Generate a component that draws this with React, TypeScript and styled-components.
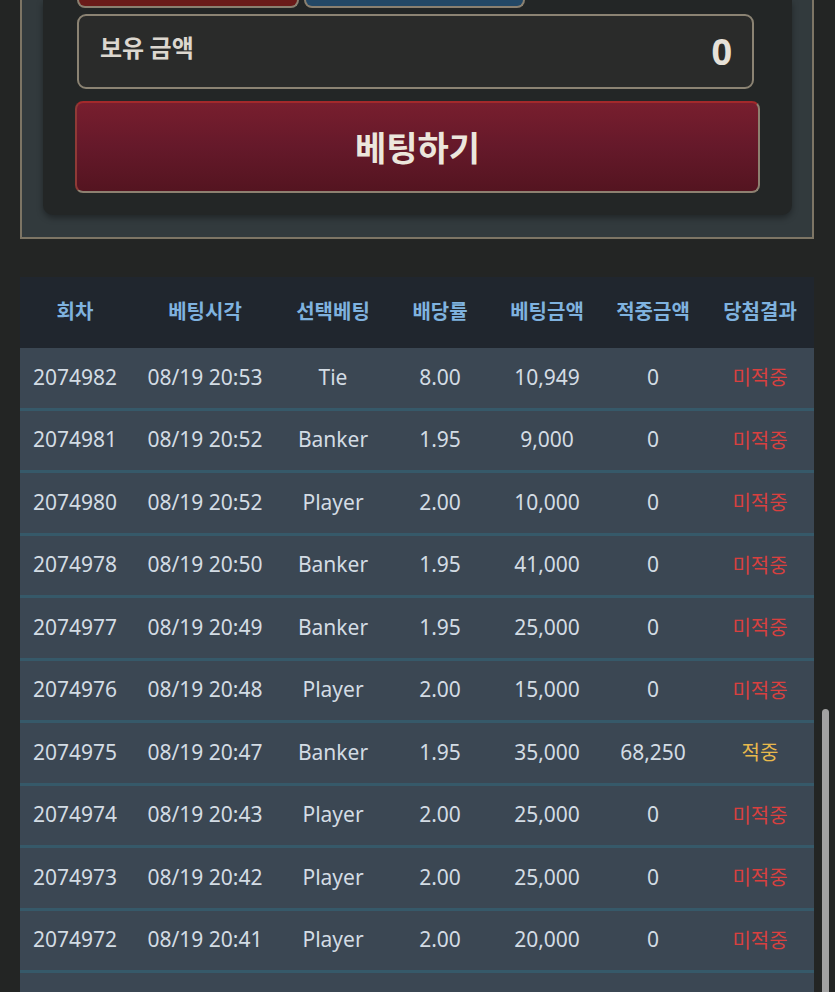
import React from "react";
import styled, { createGlobalStyle } from "styled-components";

const GlobalStyle = createGlobalStyle`
  html, body {
    margin: 0;
    padding: 0;
    overflow: hidden;
    background: #232524;
  }
  body {
    font-family: "Noto Sans", "Noto Sans CJK KR", sans-serif;
  }
  * { box-sizing: border-box; }
`;

const Page = styled.div`
  width: 835px;
  padding: 0 21px 0 20px;
  display: flex;
  flex-direction: column;
  gap: 38px;
`;

const Panel = styled.div`
  background: #323a3d;
  border: 2px solid #7d7565;
  border-top: none;
  padding: 0 20px 22px 21px;
`;

const Card = styled.div`
  background: #232626;
  border-radius: 0 0 10px 10px;
  box-shadow: 0 3px 6px rgba(0, 0, 0, 0.35);
  padding: 0 32px 22px 32px;
  display: flex;
  flex-direction: column;
`;

const ChoiceRow = styled.div`
  display: flex;
  gap: 5px;
  margin-left: 2px;
`;

const Choice = styled.div<{ $tone: "red" | "blue" }>`
  width: ${(p) => (p.$tone === "red" ? 222 : 221)}px;
  height: 8px;
  background: ${(p) => (p.$tone === "red" ? "#6a1b19" : "#234866")};
  border: 2px solid #8a8070;
  border-top: none;
  border-radius: 0 0 8px 8px;
`;

const BalanceBox = styled.div`
  margin: 6px 6px 0 2px;
  height: 75px;
  border: 2px solid #8b8373;
  border-radius: 9px;
  background: #2a2b2a;
  padding: 0 20px 0 21px;
  display: flex;
  align-items: center;
  justify-content: space-between;
`;

const BalanceLabel = styled.span`
  font-family: "Noto Sans CJK KR", sans-serif;
  font-size: 24px;
  font-weight: 700;
  color: #dcd7cf;
  margin-bottom: 10px;
`;

const BalanceValue = styled.span`
  font-size: 36px;
  font-weight: 700;
  color: #e6e1d8;
  line-height: 1;
`;

const BetButton = styled.button`
  margin-top: 12px;
  height: 92px;
  width: 100%;
  border-radius: 8px;
  border: 2px solid #8d8070;
  border-top-color: #a3292b;
  border-left-color: #8f3a36;
  background: linear-gradient(180deg, #781e2e 0%, #65192a 50%, #541420 100%);
  color: #ece6dc;
  font-family: "Noto Sans CJK KR", sans-serif;
  font-size: 34px;
  font-weight: 700;
  display: flex;
  align-items: center;
  justify-content: center;
  padding: 0 0 2px 0;
`;

const Table = styled.div`
  display: flex;
  flex-direction: column;
`;

const cols = "110px 150px 106px 108px 106px 106px 108px";

const HeadRow = styled.div`
  display: grid;
  grid-template-columns: ${cols};
  height: 71px;
  background: #20262e;
  align-items: center;
`;

const HeadCell = styled.div`
  text-align: center;
  font-family: "Noto Sans CJK KR", sans-serif;
  font-size: 20px;
  font-weight: 700;
  color: #7fb2df;
  white-space: nowrap;
  padding-bottom: 4px;
`;

const Row = styled.div`
  display: grid;
  grid-template-columns: ${cols};
  height: 62.5px;
  background: #3b4753;
  border-bottom: 3px solid #365969;
  align-items: center;
`;

const Cell = styled.div`
  text-align: center;
  font-size: 21px;
  color: #d3dce4;
  white-space: nowrap;
  padding-bottom: 2px;
`;

const Result = styled.div<{ $win: boolean }>`
  text-align: center;
  font-family: "Noto Sans CJK KR", sans-serif;
  font-size: 20px;
  color: ${(p) => (p.$win ? "#e8b94c" : "#d8403f")};
  white-space: nowrap;
  padding-bottom: 2px;
`;

const ScrollThumb = styled.div`
  position: fixed;
  right: 6px;
  top: 709px;
  width: 7px;
  height: 320px;
  border-radius: 4px;
  background: #a2a2a2;
`;

type Bet = {
  round: string;
  time: string;
  pick: string;
  odds: string;
  amount: string;
  hit: string;
  win: boolean;
};

const bets: Bet[] = [
  { round: "2074982", time: "08/19 20:53", pick: "Tie", odds: "8.00", amount: "10,949", hit: "0", win: false },
  { round: "2074981", time: "08/19 20:52", pick: "Banker", odds: "1.95", amount: "9,000", hit: "0", win: false },
  { round: "2074980", time: "08/19 20:52", pick: "Player", odds: "2.00", amount: "10,000", hit: "0", win: false },
  { round: "2074978", time: "08/19 20:50", pick: "Banker", odds: "1.95", amount: "41,000", hit: "0", win: false },
  { round: "2074977", time: "08/19 20:49", pick: "Banker", odds: "1.95", amount: "25,000", hit: "0", win: false },
  { round: "2074976", time: "08/19 20:48", pick: "Player", odds: "2.00", amount: "15,000", hit: "0", win: false },
  { round: "2074975", time: "08/19 20:47", pick: "Banker", odds: "1.95", amount: "35,000", hit: "68,250", win: true },
  { round: "2074974", time: "08/19 20:43", pick: "Player", odds: "2.00", amount: "25,000", hit: "0", win: false },
  { round: "2074973", time: "08/19 20:42", pick: "Player", odds: "2.00", amount: "25,000", hit: "0", win: false },
  { round: "2074972", time: "08/19 20:41", pick: "Player", odds: "2.00", amount: "20,000", hit: "0", win: false },
  { round: "2074971", time: "08/19 20:40", pick: "Banker", odds: "1.95", amount: "20,000", hit: "39,000", win: true },
];

const headers = ["회차", "베팅시각", "선택베팅", "배당률", "베팅금액", "적중금액", "당첨결과"];

export default function App() {
  return (
    <>
      <GlobalStyle />
      <Page>
        <Panel>
          <Card>
            <ChoiceRow>
              <Choice $tone="red" />
              <Choice $tone="blue" />
            </ChoiceRow>
            <BalanceBox>
              <BalanceLabel>보유 금액</BalanceLabel>
              <BalanceValue>0</BalanceValue>
            </BalanceBox>
            <BetButton type="button">베팅하기</BetButton>
          </Card>
        </Panel>
        <Table>
          <HeadRow>
            {headers.map((h) => (
              <HeadCell key={h}>{h}</HeadCell>
            ))}
          </HeadRow>
          {bets.map((b) => (
            <Row key={b.round}>
              <Cell>{b.round}</Cell>
              <Cell>{b.time}</Cell>
              <Cell>{b.pick}</Cell>
              <Cell>{b.odds}</Cell>
              <Cell>{b.amount}</Cell>
              <Cell>{b.hit}</Cell>
              <Result $win={b.win}>{b.win ? "적중" : "미적중"}</Result>
            </Row>
          ))}
        </Table>
      </Page>
      <ScrollThumb />
    </>
  );
}
